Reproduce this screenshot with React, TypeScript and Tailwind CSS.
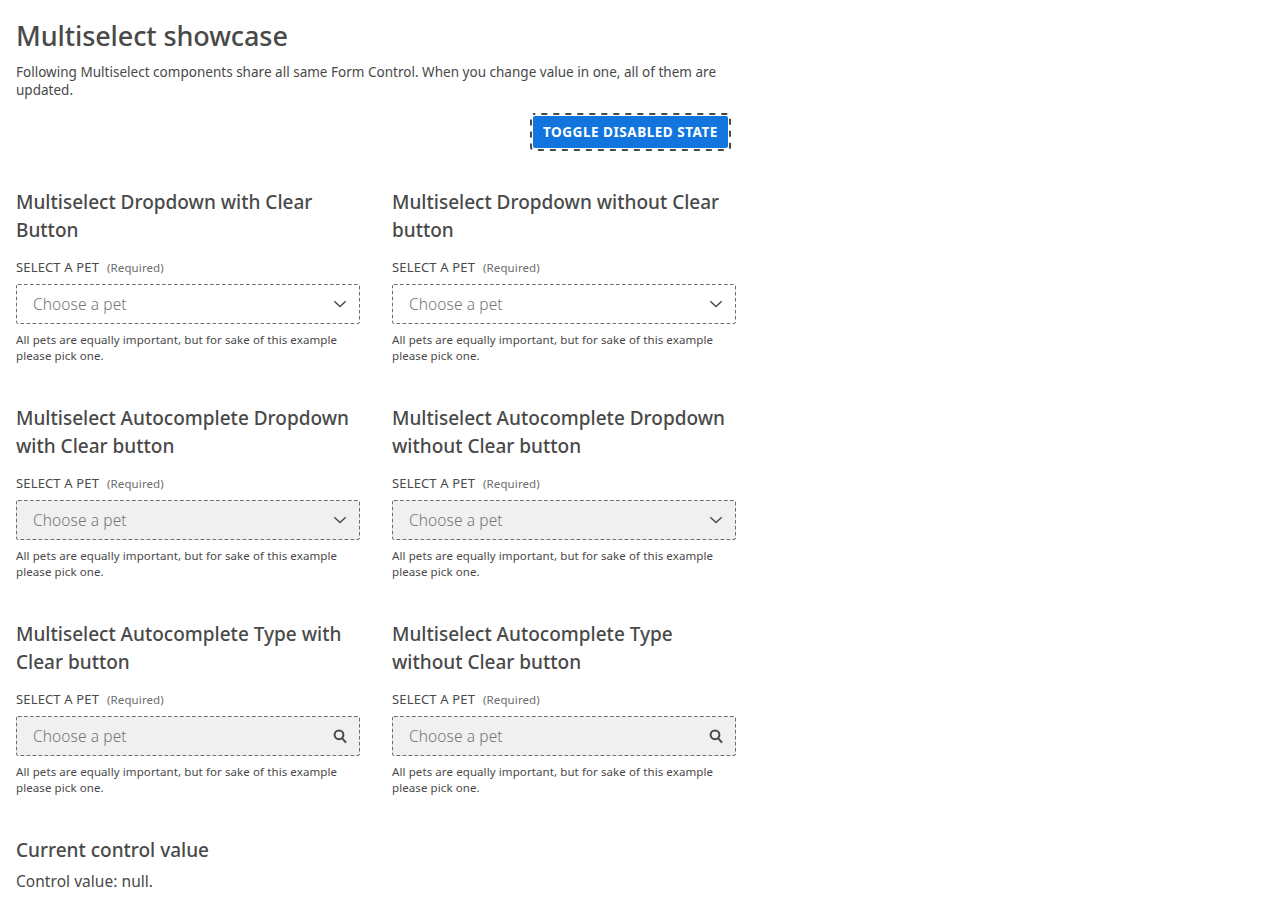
import React from "react";

type Kind = "dropdown" | "autocomplete" | "type";

const fields: { title: [string, string]; kind: Kind }[] = [
  { title: ["Multiselect Dropdown with Clear", "Button"], kind: "dropdown" },
  { title: ["Multiselect Dropdown without Clear", "button"], kind: "dropdown" },
  { title: ["Multiselect Autocomplete Dropdown", "with Clear button"], kind: "autocomplete" },
  { title: ["Multiselect Autocomplete Dropdown", "without Clear button"], kind: "autocomplete" },
  { title: ["Multiselect Autocomplete Type with", "Clear button"], kind: "type" },
  { title: ["Multiselect Autocomplete Type", "without Clear button"], kind: "type" },
];

function Chevron() {
  return (
    <svg width="16" height="16" viewBox="0 0 16 16" fill="none" stroke="#494949" strokeWidth="1.4">
      <path d="M2.3 5.2 8 10.6 13.7 5.2" />
    </svg>
  );
}

function Search() {
  return (
    <svg width="16" height="16" viewBox="0 0 16 16" fill="none" stroke="#494949" strokeWidth="2">
      <circle cx="7" cy="6.8" r="4.4" />
      <path d="M10 10.1 14 14.7" />
    </svg>
  );
}

function Field({ title, kind }: { title: [string, string]; kind: Kind }) {
  return (
    <section className="h-[216px]">
      <h2 className="text-[19px] leading-7 font-medium whitespace-nowrap">
        {title[0]}
        <br />
        {title[1]}
      </h2>
      <div className="mt-[14px] flex h-[18px] items-baseline gap-2 leading-[18px]">
        <span className="text-[13px] tracking-[0.15px]">SELECT A PET</span>
        <span className="text-[11.5px] tracking-[0.1px] text-[#6d6d6d]">(Required)</span>
      </div>
      <div
        className={`relative mt-2 flex h-10 items-center justify-between rounded-[2px] pr-3 pl-[17px] ${
          kind === "dropdown" ? "bg-white" : "bg-[#f0f0f0]"
        }`}
      >
        <svg className="absolute inset-0" width="344" height="40" fill="none" stroke="#6d6d6d">
          <rect x="0.5" y="0.5" width="343" height="39" rx="1.5" strokeDasharray="3.7 2.3" />
        </svg>
        <span className="pt-[2px] text-[15.5px] font-light tracking-[0.1px] text-[#767676]">Choose a pet</span>
        {kind === "type" ? <Search /> : <Chevron />}
      </div>
      <p className="mt-2 text-[11.5px] leading-4 tracking-[0.093px] whitespace-nowrap">
        All pets are equally important, but for sake of this example
        <br />
        please pick one.
      </p>
    </section>
  );
}

export default function App() {
  return (
    <main className="h-[908px] w-[752px] bg-white p-4 font-['Noto_Sans',sans-serif] text-[#494949]">
      <h1 className="text-[27px] leading-10 font-medium tracking-[-0.1px]">Multiselect showcase</h1>
      <p className="mt-[7px] text-[13.5px] leading-[18px] tracking-[0.015px] whitespace-nowrap">
        Following Multiselect components share all same Form Control. When you change value in one, all of them are
        <br />
        updated.
      </p>
      <div className="mt-[17px] flex justify-end pr-2">
        <button className="relative h-8 w-[195px] rounded-[2px] bg-[#1175dd] text-[13.5px] font-bold tracking-[0.53px] whitespace-nowrap text-white">
          <svg className="absolute -top-[3px] -left-[3px]" width="201" height="38" fill="none" stroke="#494949" strokeWidth="2">
            <rect x="1" y="1" width="199" height="36" rx="3" strokeDasharray="6 6" strokeDashoffset="-7.3" />
          </svg>
          TOGGLE DISABLED STATE
        </button>
      </div>
      <div className="mt-10 grid grid-cols-2 gap-x-8">
        {fields.map((field, index) => (
          <Field key={index} title={field.title} kind={field.kind} />
        ))}
      </div>
      <h2 className="text-[19px] leading-7 font-medium">Current control value</h2>
      <p className="mt-[6px] text-[15.5px] leading-[22px] tracking-[0.04px]">Control value: null.</p>
    </main>
  );
}
